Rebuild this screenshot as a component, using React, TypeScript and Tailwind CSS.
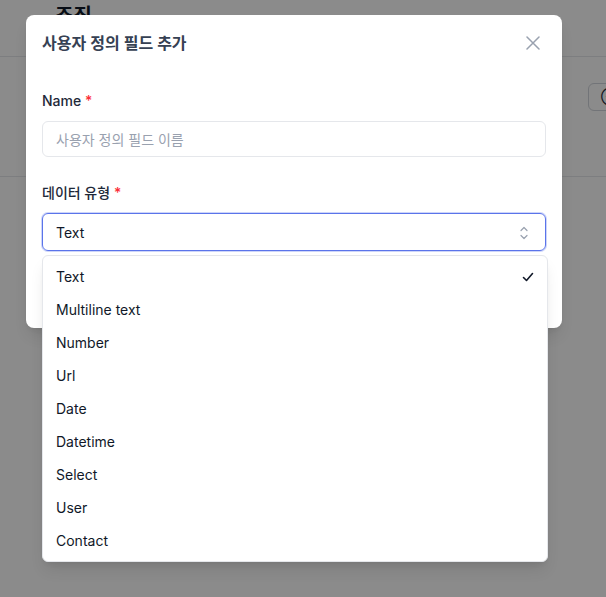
import { useState } from "react";

const dataTypes = [
  "Text",
  "Multiline text",
  "Number",
  "Url",
  "Date",
  "Datetime",
  "Select",
  "User",
  "Contact",
];

function CloseIcon() {
  return (
    <svg width="14" height="14" viewBox="0 0 14 14" fill="none" stroke="currentColor" strokeWidth="1.5" strokeLinecap="round">
      <path d="M1 1l12 12M13 1L1 13" />
    </svg>
  );
}

function UpDownIcon() {
  return (
    <svg width="10" height="16" viewBox="0 0 10 16" fill="none" stroke="currentColor" strokeWidth="1.2" strokeLinecap="round" strokeLinejoin="round">
      <path d="M2 5.5l3-3 3 3" />
      <path d="M2 10.5l3 3 3-3" />
    </svg>
  );
}

function CheckIcon() {
  return (
    <svg width="12" height="12" viewBox="0 0 12 12" fill="none" stroke="currentColor" strokeWidth="1.6" strokeLinecap="round" strokeLinejoin="round">
      <path d="M1.5 6.5l3 3 6-7" />
    </svg>
  );
}

export default function App() {
  const [selected] = useState("Text");

  return (
    <div
      className="relative h-[597px] w-full overflow-hidden bg-white"
      style={{ fontFamily: 'Inter, "Noto Sans CJK KR", sans-serif' }}
    >
      {/* page behind the modal */}
      <div className="flex flex-col">
        <div className="h-[57px] border-b border-gray-200 px-[55px] pt-[2px]">
          <h1 className="text-xl font-semibold text-gray-900">조직</h1>
        </div>
        <div className="flex h-[120px] items-start justify-end border-b border-gray-200 pt-[26px]">
          <button className="-mr-[30px] flex h-[28px] w-[48px] items-center rounded-md border border-gray-300 px-3 text-sm text-gray-800">
            ⊕
          </button>
        </div>
      </div>

      {/* overlay */}
      <div className="absolute inset-0 bg-black/[0.455]" />

      {/* dialog */}
      <div className="absolute left-[26px] top-[15px] w-[536px] rounded-lg bg-white shadow-lg">
        <div className="flex items-center justify-between px-4 pt-4">
          <h2 className="text-base font-semibold leading-6 text-gray-700">사용자 정의 필드 추가</h2>
          <button className="mr-[6px] text-gray-400">
            <CloseIcon />
          </button>
        </div>

        <div className="flex flex-col px-4 pt-9 pb-[77px]">
          <label className="text-sm font-medium leading-5 text-gray-800">
            Name <span className="text-red-500">*</span>
          </label>
          <input
            className="mt-2.5 h-9 rounded-md border border-gray-200 px-[13px] text-sm text-gray-900 outline-none placeholder:text-gray-400"
            placeholder="사용자 정의 필드 이름"
          />

          <label className="mt-[26px] text-sm font-medium leading-5 text-gray-800">
            데이터 유형 <span className="text-red-500">*</span>
          </label>
          <div className="relative mt-2.5">
            <button className="flex h-[38px] w-full items-center justify-between rounded-md border border-[#5b74ea] px-[13px] pt-[1px] text-sm text-gray-900 ring-1 ring-[#5b74ea]/30">
              <span>{selected}</span>
              <span className="mr-[3px] text-gray-400">
                <UpDownIcon />
              </span>
            </button>

            <ul className="absolute left-0 right-[-2px] top-full z-10 mt-1 rounded-md border border-gray-200 bg-white py-1 shadow-lg">
              {dataTypes.map((t) => (
                <li
                  key={t}
                  className="flex h-[33px] items-center justify-between px-[13px] text-sm text-gray-900"
                >
                  <span>{t}</span>
                  {t === selected && <CheckIcon />}
                </li>
              ))}
            </ul>
          </div>
        </div>
      </div>
    </div>
  );
}
